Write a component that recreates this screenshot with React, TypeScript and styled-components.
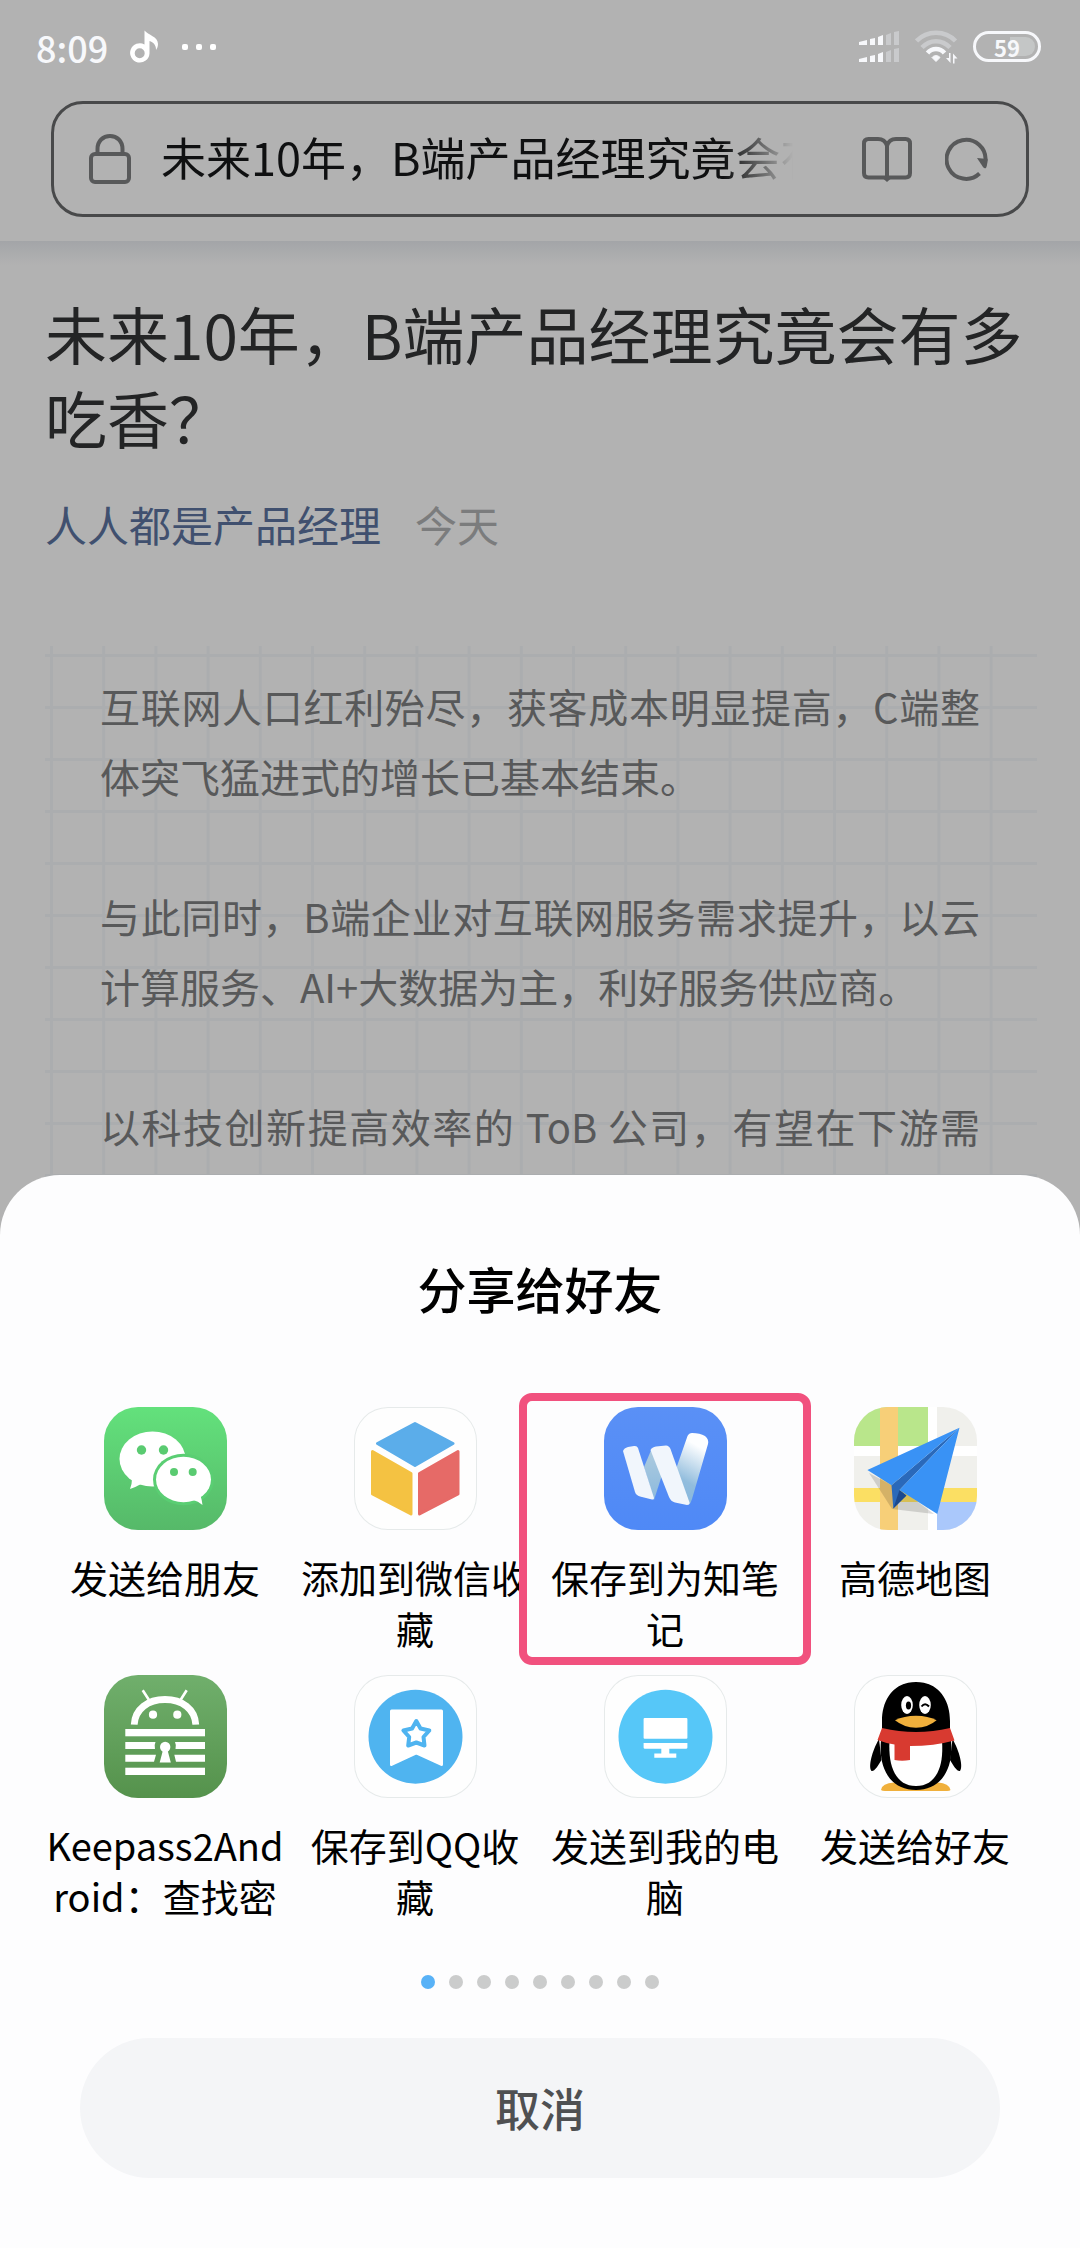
import React from "react";
import styled, { createGlobalStyle, css } from "styled-components";

const GlobalStyle = createGlobalStyle`
  *, *::before, *::after { box-sizing: border-box; }
  body {
    margin: 0;
    background: #b2b2b2;
    font-family: "Noto Sans CJK SC", "Noto Sans", sans-serif;
  }
  h1, h2, p, ul { margin: 0; padding: 0; }
  ul { list-style: none; }
  svg { display: block; flex: none; }
`;

const plainButton = css`
  border: 0;
  padding: 0;
  margin: 0;
  background: none;
  font-family: inherit;
  color: inherit;
  cursor: pointer;
`;

const Screen = styled.div`
  display: flex;
  flex-direction: column;
  min-height: 100vh;
  background: #b2b2b2;
`;

const Header = styled.header`
  display: flex;
  flex-direction: column;
  padding-bottom: 24px;
`;

const StatusBar = styled.div`
  display: flex;
  align-items: center;
  justify-content: space-between;
  height: 101px;
  padding: 28px 39px 36px 36px;
  color: #f7f8fb;
`;

const StatusGroup = styled.div<{ $gap: number }>`
  display: flex;
  align-items: center;
  gap: ${(p) => p.$gap}px;
`;

const Clock = styled.time`
  font-size: 36px;
  line-height: 36px;
  font-weight: 500;
`;

const Battery = styled.div`
  display: flex;
  align-items: center;
  justify-content: center;
  width: 68px;
  height: 31px;
  border: 3px solid #f7f8fb;
  border-radius: 16px;
  background: linear-gradient(90deg, #b2b2b2 55%, #c4c6c6 55%) content-box;
  padding: 3px;
  font-size: 22px;
  line-height: 22px;
  font-weight: 700;
`;

const AddressBar = styled.div`
  display: flex;
  align-items: center;
  height: 116px;
  margin: 0 51px;
  padding: 0 37px 0 35px;
  border: 3px solid #48494a;
  border-radius: 32px;
  color: #58595a;
`;

const AddressInput = styled.input`
  flex: 1;
  min-width: 0;
  margin: 0 68px 0 30px;
  padding: 0 0 4px;
  border: 0;
  outline: 0;
  background: none;
  font-family: inherit;
  font-size: 45px;
  line-height: 64px;
  color: #0f1011;
  mask-image: linear-gradient(90deg, #000 89%, transparent 100%);
`;

const AddressActions = styled.div`
  display: flex;
  align-items: center;
  gap: 32px;
`;

const IconButton = styled.button`
  ${plainButton}
`;

const Article = styled.main`
  flex: 1;
  display: flex;
  flex-direction: column;
  padding: 50px 43px 0 45px;
  background: linear-gradient(#a3a5a8, #b2b2b2 24px);
`;

const Headline = styled.h1`
  font-size: 62px;
  line-height: 84px;
  font-weight: 400;
  color: #232425;
`;

const Byline = styled.div`
  display: flex;
  gap: 34px;
  margin-top: 35px;
  font-size: 42px;
  line-height: 60px;
  color: #7b7c7d;
`;

const Author = styled.a`
  color: #40506f;
  text-decoration: none;
`;

const Paper = styled.section`
  flex: 1;
  margin-top: 92px;
  padding: 25px 57px 0 55px;
  background-image: linear-gradient(90deg, #abadaf 3px, transparent 3px),
    linear-gradient(#abadaf 3px, transparent 3px);
  background-size: calc(100% / 19) 100%, 100% 52px;
  background-position: 5px 0, 0 8px;
`;

const Paragraph = styled.p<{ $cut?: boolean }>`
  margin-bottom: 70px;
  font-size: 40px;
  line-height: 70px;
  color: #58595a;
  text-align: justify;
  text-align-last: ${(p) => (p.$cut ? "justify" : "auto")};
`;

const Sheet = styled.section`
  position: fixed;
  left: 0;
  right: 0;
  bottom: 0;
  display: flex;
  flex-direction: column;
  padding: 77px 40px 70px;
  border-radius: 60px 60px 0 0;
  background: #fdfdfe;
`;

const SheetTitle = styled.h2`
  margin-bottom: 83px;
  font-size: 49px;
  line-height: 72px;
  font-weight: 500;
  text-align: center;
  color: #000;
`;

const AppGrid = styled.ul`
  display: grid;
  grid-template-columns: repeat(4, 1fr);
  row-gap: 19px;
`;

const AppCell = styled.li<{ $marked?: boolean }>`
  ${(p) =>
    p.$marked &&
    css`
      position: relative;
      isolation: isolate;
      &::after {
        content: "";
        position: absolute;
        z-index: -1;
        inset: -14px -21px -9px;
        border: 8px solid #f1517e;
        border-radius: 13px;
        background: #fdfdfe;
      }
    `}
`;

const AppButton = styled.button`
  ${plainButton}
  display: flex;
  flex-direction: column;
  align-items: center;
  gap: 21px;
  width: 100%;
  min-height: 249px;
`;

const Tile = styled.span<{ $fill: string; $outlined?: boolean }>`
  display: block;
  width: 123px;
  height: 123px;
  border-radius: 34px;
  overflow: hidden;
  background: ${(p) => p.$fill};
  box-shadow: ${(p) => (p.$outlined ? "inset 0 0 0 1px #e6eaea" : "none")};
`;

const AppLabel = styled.span`
  font-size: 38px;
  line-height: 51px;
  text-align: center;
  white-space: pre;
  color: #000;
`;

const Pager = styled.div`
  display: flex;
  justify-content: center;
  gap: 14px;
  margin: 51px 0 49px;
`;

const Dot = styled.span<{ $active?: boolean }>`
  width: 14px;
  height: 14px;
  border-radius: 50%;
  background: ${(p) => (p.$active ? "#58b2f7" : "#cbcccc")};
`;

const CancelButton = styled.button`
  ${plainButton}
  height: 140px;
  margin: 0 40px;
  border-radius: 70px;
  background: #f4f5f7;
  font-size: 45px;
  line-height: 64px;
  font-weight: 500;
  color: #4f5052;
`;

const NoteIcon = () => (
  <svg width="29" height="33" viewBox="0 0 29 33" fill="#fff">
    <path d="M14.500 0.500C18 5 28 6.500 28 14C28 16.500 27 18.500 26 20C26.200 15 23.500 12.500 19.500 11V23.500A9.700 9.700 0 1 1 14.500 14.400Z M9.700 18.200A5 5 0 1 0 9.701 28.200A5 5 0 1 0 9.700 18.200Z" fillRule="evenodd" />
  </svg>
);

const MoreIcon = () => (
  <svg width="36" height="8" viewBox="0 0 36 8" fill="#fff">
    <rect x="1" y="1" width="6" height="6" rx="2" />
    <rect x="15" y="1" width="6" height="6" rx="2" />
    <rect x="29" y="1" width="6" height="6" rx="2" />
  </svg>
);

const SignalIcon = () => (
  <svg width="41" height="32" viewBox="0 0 41 32">
    {[0, 17].map((y) => (
      <g key={y} transform={`translate(0 ${y})`} fill="#f7f8fb">
        <path d="M0 11L8 9V14H0Z M11 8L16 7V14H11Z M19 6L24 4V14H19Z" />
        <path d="M27 4L32 2V14H27Z M35 1L40 0V14H35Z" fill="#c9cacc" />
      </g>
    ))}
  </svg>
);

const WifiIcon = () => (
  <svg width="43" height="34" viewBox="0 0 43 34" fill="none">
    <path d="M1.500 11C12 0 30 0 40.500 11" stroke="#c9cacc" strokeWidth="4.500" />
    <path d="M7 17.500C15 9 27 9 35 17.500" stroke="#c9cacc" strokeWidth="4.500" />
    <path d="M12.500 23C17 17.500 25 17.500 29.500 23" stroke="#f7f8fb" strokeWidth="4.500" />
    <path d="M21 31.500L17 27.500C19 25 23 25 25 27.500Z" fill="#f7f8fb" stroke="#f7f8fb" />
    <path d="M35.500 23V33L31 28H34V23Z M38 33.500V23.500L42.500 28.500H39.500V33.500Z" fill="#f7f8fb" />
  </svg>
);

const LockIcon = () => (
  <svg width="42" height="50" viewBox="0 0 42 50" fill="none" stroke="currentColor" strokeWidth="4">
    <rect x="2" y="20" width="38" height="28" rx="4" />
    <path d="M8.500 20V15C8.500 7 14 2 21 2S33.500 7 33.500 15V20" />
  </svg>
);

const BookIcon = () => (
  <svg width="52" height="46" viewBox="0 0 52 46" fill="none" stroke="currentColor" strokeWidth="4">
    <path d="M26 9.500C24.500 5 21 3 17 3H7.500C4.500 3 3 4.500 3 7.500V37C3 40 4.500 41.500 7.500 41.500H44.500C47.500 41.500 49 40 49 37V7.500C49 4.500 47.500 3 44.500 3H35C31 3 27.500 5 26 9.500V42" />
    <path d="M22 42.500H30L26 46Z" fill="currentColor" stroke="none" />
  </svg>
);

const RefreshIcon = () => (
  <svg width="44" height="46" viewBox="0 0 44 46">
    <path d="M34.500 37.500A19.500 19.500 0 1 1 40.500 25" fill="none" stroke="currentColor" strokeWidth="4" />
    <path d="M32 22L42.500 23V26Q42 30 41 32Q39.500 33 38 31Z" fill="currentColor" />
  </svg>
);

const WeChatLogo = () => (
  <svg width="123" height="123" viewBox="0 0 123 123">
    <g fill="#fff">
      <ellipse cx="48.500" cy="52" rx="33" ry="27.500" />
      <path d="M28 72Q28 77 26 82Q32 80 37 77Z" />
    </g>
    <ellipse cx="79.500" cy="72.500" rx="30.500" ry="25.700" fill="#5ace73" />
    <g fill="#fff">
      <ellipse cx="79.500" cy="72.500" rx="27.500" ry="22.700" />
      <path d="M89 93Q94 94 98.500 98Q98 93 96 87Z" />
    </g>
    <g fill="#5acb71">
      <circle cx="37.500" cy="43" r="4.700" />
      <circle cx="59.500" cy="43" r="4.700" />
      <circle cx="70" cy="65" r="4" />
      <circle cx="88.700" cy="65" r="4" />
    </g>
  </svg>
);

const CubeLogo = () => (
  <svg width="123" height="123" viewBox="0 0 123 123" strokeWidth="3" strokeLinejoin="round">
    <path d="M61 16.500L99 36.500L61 58.500L23.500 36.500Z" fill="#5badea" stroke="#5badea" />
    <path d="M18.500 44.500L57 66.500V107L18.500 87Z" fill="#f4c242" stroke="#f4c242" />
    <path d="M104 44.500L65.500 66.500V107L104 87Z" fill="#e66a67" stroke="#e66a67" />
  </svg>
);

const WizLogo = () => (
  <svg width="123" height="123" viewBox="0 0 123 123">
    <defs>
      <linearGradient id="wizRight" x1="0.600" y1="0" x2="0.350" y2="1">
        <stop offset="0.150" stopColor="#fdfeff" />
        <stop offset="0.700" stopColor="#92bddd" />
        <stop offset="1" stopColor="#86b7de" />
      </linearGradient>
      <linearGradient id="wizLeft" x1="0" y1="0" x2="0" y2="1">
        <stop offset="0" stopColor="#aecbdf" />
        <stop offset="1" stopColor="#8cbadd" />
      </linearGradient>
    </defs>
    <path d="M48 41L40 60L50 93L58 68Z" fill="url(#wizLeft)" />
    <path d="M83.500 29Q85 26 88 26Q96 26 101 29Q105 32 104 37L88 92Q87 96 84.500 98L72 62Z" fill="url(#wizRight)" />
    <path d="M19 44Q20 41 24 40L30 39Q33 38.500 34 41L50 91Q50 93 48 92.500L36 89.500Q32 88 31 85Z" fill="#f1f6fc" />
    <path d="M46.500 43Q48 40 52 39.500L62 38.500Q65 38.500 66.500 42L85.700 96Q85.500 98 83 98L71 95.500Q67 94.500 65 90Z" fill="#f1f6fc" />
  </svg>
);

const MapLogo = () => (
  <svg width="123" height="123" viewBox="0 0 123 123">
    <rect width="74" height="39" fill="#b9e68b" />
    <rect x="83" y="95" width="40" height="28" fill="#aac8fb" />
    <path d="M0 39H123V49H0Z M74 0H83V123H74Z" fill="#fff" />
    <rect y="81" width="123" height="14" fill="#fbdf63" />
    <rect x="26" width="18" height="123" fill="#f7cf78" />
    <path d="M15 66L38 102L80 107L52 86Z" fill="#000" fillOpacity="0.140" />
    <path d="M105.500 20.700L37.500 78.300L39.300 101.500L52 88.700L45.500 83Z" fill="#2a69ba" />
    <path d="M45.500 83L39.300 101.500L52.500 88.500Z" fill="#1b498f" />
    <path d="M105.500 20.700L13.400 63L37.500 78.300Z M105.500 20.700L45.500 83L83.300 107Z" fill="#3992f5" />
  </svg>
);

const KeepassLogo = () => (
  <svg width="123" height="123" viewBox="0 0 123 123">
    <g fill="none" stroke="#fff">
      <path d="M30.200 49.700C31 34 44 24.500 61 24.500S91 34 91.800 49.700" strokeWidth="6.800" />
      <path d="M38.700 15.300L45 25M82.700 15.300L76.500 25" strokeWidth="2.600" />
    </g>
    <g fill="#fff">
      <circle cx="49" cy="39.700" r="4.100" />
      <circle cx="73.300" cy="39.700" r="4.100" />
      <rect x="21.300" y="54" width="79.700" height="7.300" />
      <path d="M21.300 67H51.500Q50 70 51 74H21.300Z M101 67H71Q72.500 70 71.500 74H101Z" />
      <path d="M21.300 79.700H52L50 86.700H21.300Z M101 79.700H70.300L72 86.700H101Z" />
      <rect x="21.300" y="92.700" width="79.700" height="7.300" />
      <circle cx="61.200" cy="72" r="5.200" />
      <path d="M59 75H63.500L66.800 87.500H55.700Z" />
    </g>
  </svg>
);

const BookmarkLogo = () => (
  <svg width="123" height="123" viewBox="0 0 123 123" strokeLinejoin="round">
    <circle cx="61.500" cy="61.700" r="47" fill="#4fb4f0" />
    <path d="M37.500 36H87.500V89.500L62.300 78L37.500 89.500Z" fill="#fff" stroke="#fff" strokeWidth="3" />
    <path d="M62.300 46L66.500 53.500L75.300 55.500L69.500 62L70.500 70.500L62.300 67.500L54.200 70.500L55.200 62L49.400 55.500L58.100 53.500Z" fill="none" stroke="#4fb4f0" strokeWidth="4" />
  </svg>
);

const ComputerLogo = () => (
  <svg width="123" height="123" viewBox="0 0 123 123">
    <circle cx="61.500" cy="61.700" r="47" fill="#56c7f8" />
    <g fill="#fff">
      <rect x="39.600" y="43" width="43.800" height="20.700" rx="1" />
      <path d="M39.600 68H83.400V72.500Q83.400 73.700 82 73.700H65.300V78.500H72.300V82.700H50.300V78.500H57.300V73.700H41Q39.600 73.700 39.600 72.500Z" />
    </g>
  </svg>
);

const PenguinLogo = () => (
  <svg width="123" height="123" viewBox="0 0 123 123">
    <path d="M27 115Q28 108 40 107.500H84Q95 108 96.500 115Q96 116 93 116H31Q28 116 27 115Z" fill="#f0b03c" />
    <path d="M25 64C18 76 14 92 17.500 96C20 97 24 91 27.500 85Z M98.500 64C105.500 76 109.500 92 106 96C103.500 97 99.500 91 96 85Z" fill="#000" />
    <path d="M62 7C40 7 28 24 28 46V58C22 92 36 115 62 115S102 92 96 58V46C96 24 84 7 62 7Z" fill="#000" />
    <path d="M35.500 66C34 92 42 111 62 111S90 92 88 66Z" fill="#fff" />
    <path d="M28 53Q62 61 96 53L100.500 65.500Q80 71 56 71V85Q48 86.500 40.500 85V69.500Q31 68 23.500 65Z" fill="#d83a30" />
    <ellipse cx="53" cy="30" rx="5.800" ry="9" fill="#fff" />
    <ellipse cx="71" cy="30" rx="5.800" ry="9" fill="#fff" />
    <ellipse cx="54.500" cy="30.500" rx="2.600" ry="4" fill="#000" />
    <path d="M67.500 31.500Q71 27 75 31.500" fill="none" stroke="#000" strokeWidth="2" />
    <path d="M41 45.300Q50 40.700 62 40.700T82.600 45.300Q74 52.700 62 52.700T41 45.300Z" fill="#f0b03c" />
  </svg>
);

interface ShareTarget {
  label: string;
  fill: string;
  outlined?: boolean;
  marked?: boolean;
  Logo: () => React.JSX.Element;
}

const targets: ShareTarget[] = [
  { label: "发送给朋友", fill: "linear-gradient(#63e17c, #56b969)", Logo: WeChatLogo },
  { label: "添加到微信收\n藏", fill: "#fefefe", outlined: true, Logo: CubeLogo },
  { label: "保存到为知笔\n记", fill: "linear-gradient(#5a90f6, #4f89f6)", marked: true, Logo: WizLogo },
  { label: "高德地图", fill: "#f0f0ec", Logo: MapLogo },
  { label: "Keepass2And\nroid：查找密", fill: "linear-gradient(#70af6c, #55924c)", Logo: KeepassLogo },
  { label: "保存到QQ收\n藏", fill: "#fefefe", outlined: true, Logo: BookmarkLogo },
  { label: "发送到我的电\n脑", fill: "#fefefe", outlined: true, Logo: ComputerLogo },
  { label: "发送给好友", fill: "#fefefe", outlined: true, Logo: PenguinLogo },
];

const pages = Array.from({ length: 9 }, (_, i) => i);

export default function App() {
  return (
    <>
      <GlobalStyle />
      <Screen lang="zh-CN">
        <Header>
          <StatusBar>
            <StatusGroup $gap={22}>
              <Clock>8:09</Clock>
              <NoteIcon />
              <MoreIcon />
            </StatusGroup>
            <StatusGroup $gap={15}>
              <SignalIcon />
              <WifiIcon />
              <Battery>59</Battery>
            </StatusGroup>
          </StatusBar>
          <AddressBar>
            <LockIcon />
            <AddressInput aria-label="地址栏" readOnly value="未来10年，B端产品经理究竟会有多吃香？" />
            <AddressActions>
              <IconButton type="button" aria-label="阅读模式">
                <BookIcon />
              </IconButton>
              <IconButton type="button" aria-label="刷新">
                <RefreshIcon />
              </IconButton>
            </AddressActions>
          </AddressBar>
        </Header>
        <Article>
          <Headline>未来10年，B端产品经理究竟会有多吃香？</Headline>
          <Byline>
            <Author href="#">人人都是产品经理</Author>
            <span>今天</span>
          </Byline>
          <Paper>
            <Paragraph>互联网人口红利殆尽，获客成本明显提高，C端整体突飞猛进式的增长已基本结束。</Paragraph>
            <Paragraph>与此同时，B端企业对互联网服务需求提升，以云计算服务、AI+大数据为主，利好服务供应商。</Paragraph>
            <Paragraph $cut>以科技创新提高效率的 ToB 公司，有望在下游需</Paragraph>
          </Paper>
        </Article>
      </Screen>
      <Sheet role="dialog" aria-labelledby="share-title">
        <SheetTitle id="share-title">分享给好友</SheetTitle>
        <AppGrid>
          {targets.map(({ label, fill, outlined, marked, Logo }) => (
            <AppCell key={label} $marked={marked}>
              <AppButton type="button">
                <Tile $fill={fill} $outlined={outlined}>
                  <Logo />
                </Tile>
                <AppLabel>{label}</AppLabel>
              </AppButton>
            </AppCell>
          ))}
        </AppGrid>
        <Pager>
          {pages.map((page) => (
            <Dot key={page} $active={page === 0} />
          ))}
        </Pager>
        <CancelButton type="button">取消</CancelButton>
      </Sheet>
    </>
  );
}
